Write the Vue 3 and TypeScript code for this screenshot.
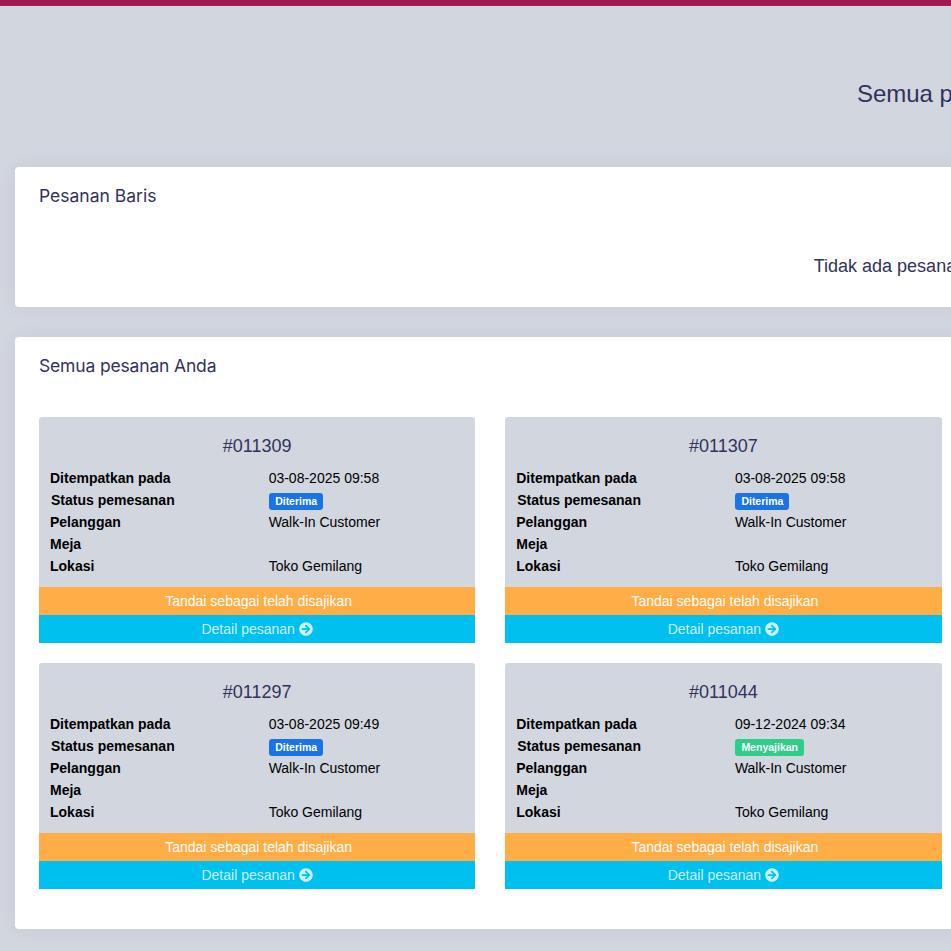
<script setup lang="ts">
interface Order { no: string; placed: string; status: string; kind: string }
const orders: Order[] = [
  { no: '#011309', placed: '03-08-2025 09:58', status: 'Diterima', kind: 'received' },
  { no: '#011307', placed: '03-08-2025 09:58', status: 'Diterima', kind: 'received' },
  { no: '#011297', placed: '03-08-2025 09:49', status: 'Diterima', kind: 'received' },
  { no: '#011044', placed: '09-12-2024 09:34', status: 'Menyajikan', kind: 'serving' },
]
</script>

<template>
  <div class="page">
    <div class="topbar"></div>
    <h1 class="heading">Semua pesanan Anda</h1>
    <section class="panel queue">
      <h2 class="panel-title">Pesanan Baris</h2>
      <p class="empty">Tidak ada pesanan dalam antrean saat ini</p>
    </section>
    <section class="panel all">
      <h2 class="panel-title">Semua pesanan Anda</h2>
      <div class="grid">
        <article v-for="o in orders" :key="o.no" class="card">
          <h3 class="no">{{ o.no }}</h3>
          <table class="info">
            <tbody>
              <tr><th>Ditempatkan pada</th><td>{{ o.placed }}</td></tr>
              <tr>
                <th class="status-label">Status pemesanan</th>
                <td><span class="badge" :class="o.kind">{{ o.status }}</span></td>
              </tr>
              <tr><th>Pelanggan</th><td>Walk-In Customer</td></tr>
              <tr><th>Meja</th><td></td></tr>
              <tr><th>Lokasi</th><td>Toko Gemilang</td></tr>
            </tbody>
          </table>
          <div class="action serve">Tandai sebagai telah disajikan</div>
          <div class="action detail">
            Detail pesanan
            <svg class="icon" viewBox="0 0 512 512" aria-hidden="true">
              <path fill="currentColor" d="M256 8c137 0 248 111 248 248S393 504 256 504 8 393 8 256 119 8 256 8zm-28.9 143.6l75.5 72.4H120c-13.3 0-24 10.7-24 24v16c0 13.3 10.7 24 24 24h182.6l-75.5 72.4c-9.7 9.3-9.9 24.8-.4 34.3l11 10.9c9.4 9.4 24.6 9.4 33.9 0L404.3 273c9.4-9.4 9.4-24.6 0-33.9L271.6 106.3c-9.4-9.4-24.6-9.4-33.9 0l-11 10.9c-9.3 9.6-9.1 25.1.4 34.4z"/>
            </svg>
          </div>
        </article>
      </div>
    </section>
  </div>
</template>

<style>
html, body { margin: 0; overflow: hidden; background: #d2d6df; }
</style>

<style scoped>
.page {
  width: 1950px;
  height: 951px;
  background: #d2d6df;
  font-family: "Liberation Sans", Arial, sans-serif;
  color: #000;
  box-sizing: border-box;
  padding: 0 15px;
}
.topbar {
  height: 5px;
  margin: 0 -15px;
  background: #a1164f;
  border-bottom: 1px solid #8f2a57;
}
.heading {
  margin: 0;
  height: 161px;
  box-sizing: border-box;
  padding-top: 74px;
  font-size: 24px;
  line-height: 28px;
  font-weight: 400;
  text-align: center;
  color: #32325d;
}
.panel {
  background: #fff;
  border-radius: 4px;
  box-sizing: border-box;
  padding: 18px 24px 0;
  box-shadow: 0 0 20px rgba(50, 50, 93, 0.06);
}
.queue { height: 140px; margin-bottom: 30px; }
.all { height: 592px; }
.panel-title {
  margin: 0;
  font-family: Inter, "Liberation Sans", sans-serif;
  font-size: 17.5px;
  line-height: 22px;
  font-weight: 400;
  color: #32325d;
}
.all .panel-title { letter-spacing: -0.16px; }
.empty {
  margin: 48px 0 0;
  padding-left: 12px;
  font-size: 18px;
  line-height: 22px;
  text-align: center;
  color: #32325d;
}
.grid {
  display: grid;
  grid-template-columns: 436.25px 436.25px;
  column-gap: 30px;
  row-gap: 20px;
  margin-top: 40px;
}
.card {
  background: #d2d6df;
  border-radius: 3px 3px 0 0;
  overflow: hidden;
}
.no {
  margin: 0;
  padding-top: 18px;
  font-size: 18px;
  line-height: 22px;
  font-weight: 400;
  text-align: center;
  color: #32325d;
}
.info {
  width: 100%;
  border-collapse: collapse;
  table-layout: fixed;
  margin-top: 10px;
  margin-bottom: 10px;
  font-size: 14px;
  line-height: 22px;
}
.info th, .info td { padding: 0; height: 22px; text-align: left; vertical-align: middle; }
.info th { font-weight: 700; padding-left: 11px; }
.info .status-label { padding-left: 12px; }
.info td { padding-left: 11.5px; }
.badge {
  display: inline-block;
  height: 17px;
  line-height: 17px;
  padding: 0 6px 0 6.5px;
  border-radius: 3px;
  font-size: 10.5px;
  font-weight: 700;
  color: #fff;
  vertical-align: middle;
}
.received { background: #1b74e4; }
.serving { background: #2dce89; }
.action {
  height: 28px;
  line-height: 28px;
  font-size: 14px;
  text-align: center;
}
.serve { background: #ffad46; color: #fff; padding-left: 3px; }
.detail { background: #00c0ef; color: rgba(255, 255, 255, 0.8); }
.icon { width: 14px; height: 14px; vertical-align: -2px; }
</style>
